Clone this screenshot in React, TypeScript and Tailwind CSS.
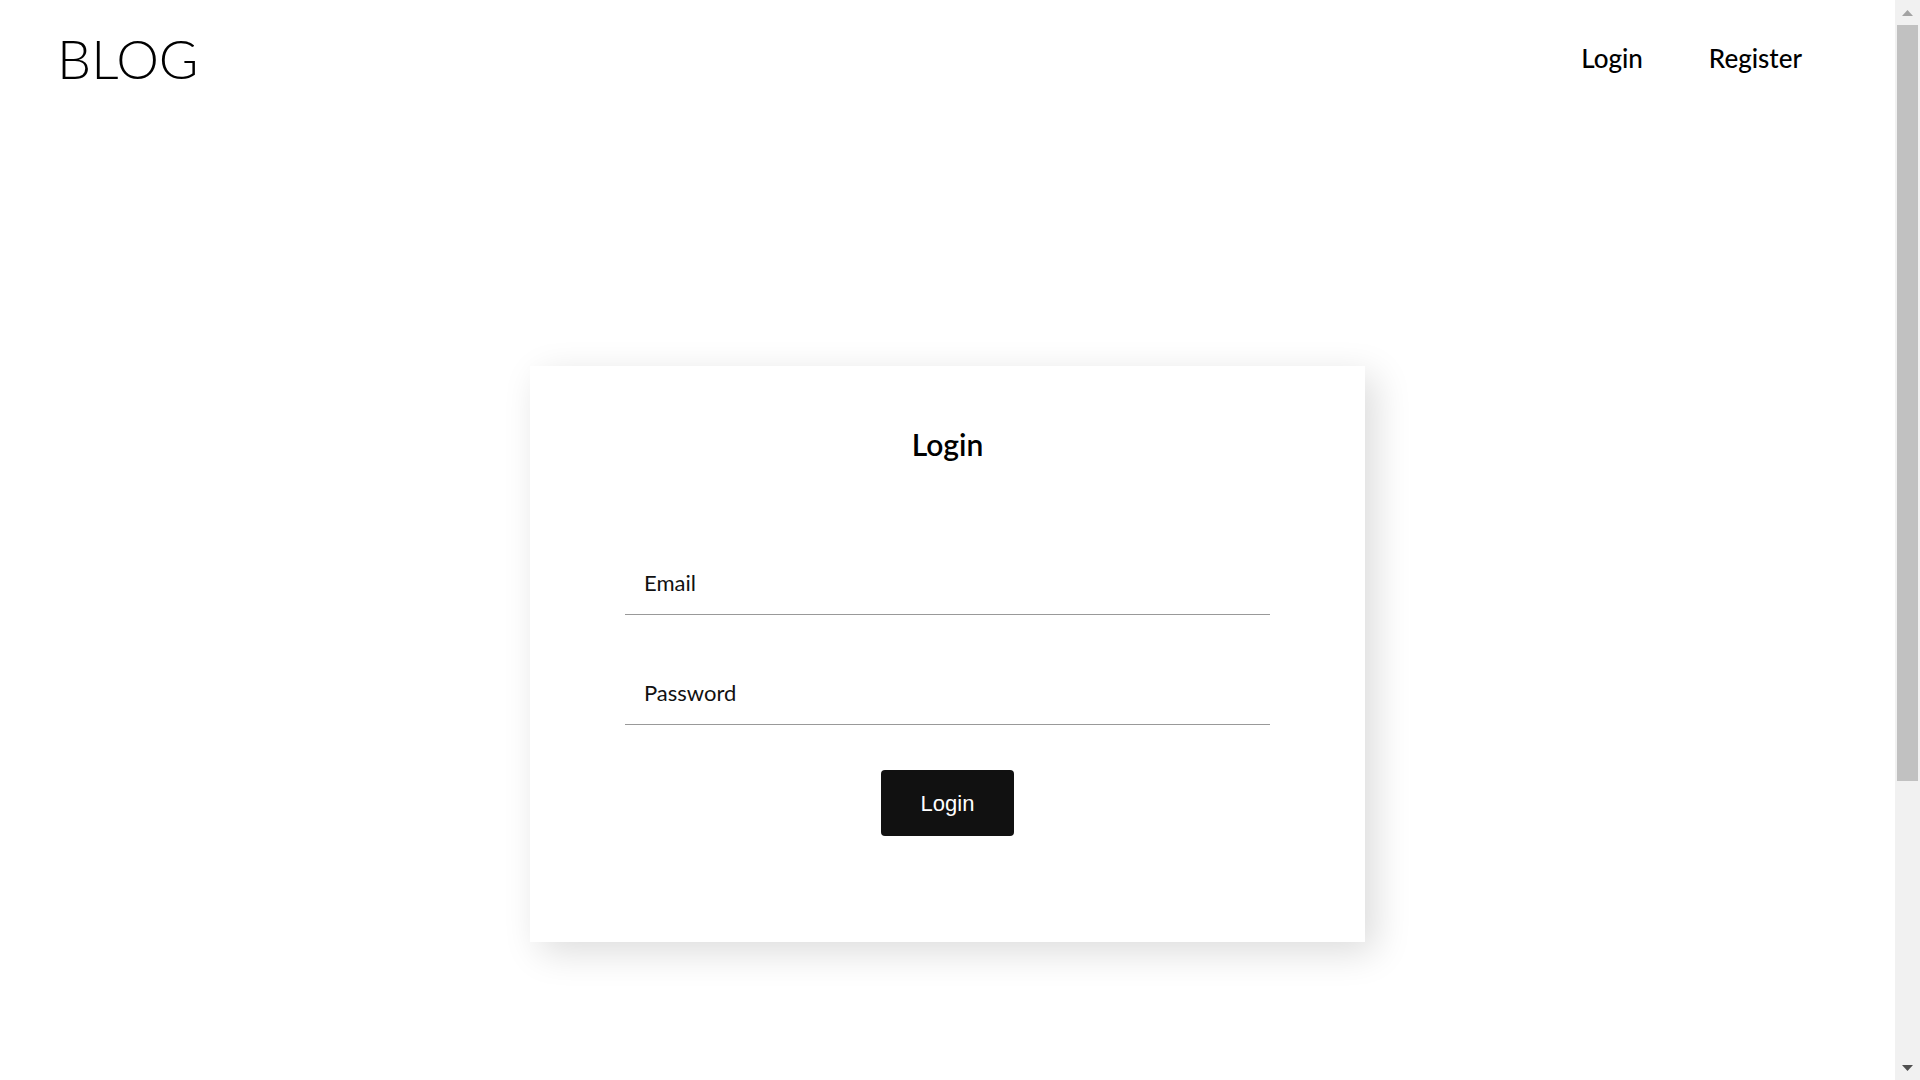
import { memo } from 'react';

const Header = () => {
  return (
    <header className="flex h-[116px] items-center justify-between pl-[57px] pr-[93px]">
      <a href="#" className="text-[54px] font-light leading-normal text-black">
        BLOG
      </a>
      <nav className="flex items-center gap-[66px]">
        <a href="#" className="text-[26px] font-medium text-black">
          Login
        </a>
        <a href="#" className="text-[26px] font-medium text-black">
          Register
        </a>
      </nav>
    </header>
  );
};

const LoginForm = () => {
  return (
    <div className="w-[835px] bg-white px-[95px] pt-[56px] pb-[106px] shadow-[10px_10px_35px_rgba(0,0,0,0.14)]">
      <h1 className="text-center text-[30px] font-semibold leading-normal text-black">Login</h1>

      <form className="mt-[92px] flex flex-col items-center" onSubmit={(e) => e.preventDefault()}>
        <input
          type="email"
          placeholder="Email"
          className="h-[56px] w-full border-b border-[#999] px-[19px] pb-[8px] text-[22px] text-black outline-none placeholder:text-[#111]"
        />
        <input
          type="password"
          placeholder="Password"
          className="mt-[54px] h-[56px] w-full border-b border-[#999] px-[19px] pb-[8px] text-[22px] text-black outline-none placeholder:text-[#111]"
        />
        <button
          type="submit"
          className="mt-[45px] h-[66px] w-[133px] rounded-[4px] bg-[#111] font-['Liberation_Sans',Arial,sans-serif] text-[22px] text-white"
        >
          Login
        </button>
      </form>
    </div>
  );
};

const Scrollbar = () => {
  return (
    <div className="flex h-screen w-[25px] shrink-0 flex-col bg-[#f1f1f1]">
      <div className="flex h-[25px] items-center justify-center">
        <svg width="11" height="6" viewBox="0 0 11 6">
          <polygon points="5.5,0 11,6 0,6" fill="#a3a3a3" />
        </svg>
      </div>
      <div className="mx-[2px] h-[756px] bg-[#c1c1c1]" />
      <div className="flex-1" />
      <div className="flex h-[25px] items-center justify-center">
        <svg width="11" height="6" viewBox="0 0 11 6">
          <polygon points="0,0 11,0 5.5,6" fill="#505050" />
        </svg>
      </div>
    </div>
  );
};

const App = () => {
  return (
    <div className="flex h-screen w-full overflow-hidden bg-white font-['Lato',sans-serif]">
      <div className="flex-1 overflow-hidden">
        <Header />
        <main className="flex justify-center pt-[250px]">
          <LoginForm />
        </main>
      </div>
      <Scrollbar />
    </div>
  );
};

export default memo(App);
